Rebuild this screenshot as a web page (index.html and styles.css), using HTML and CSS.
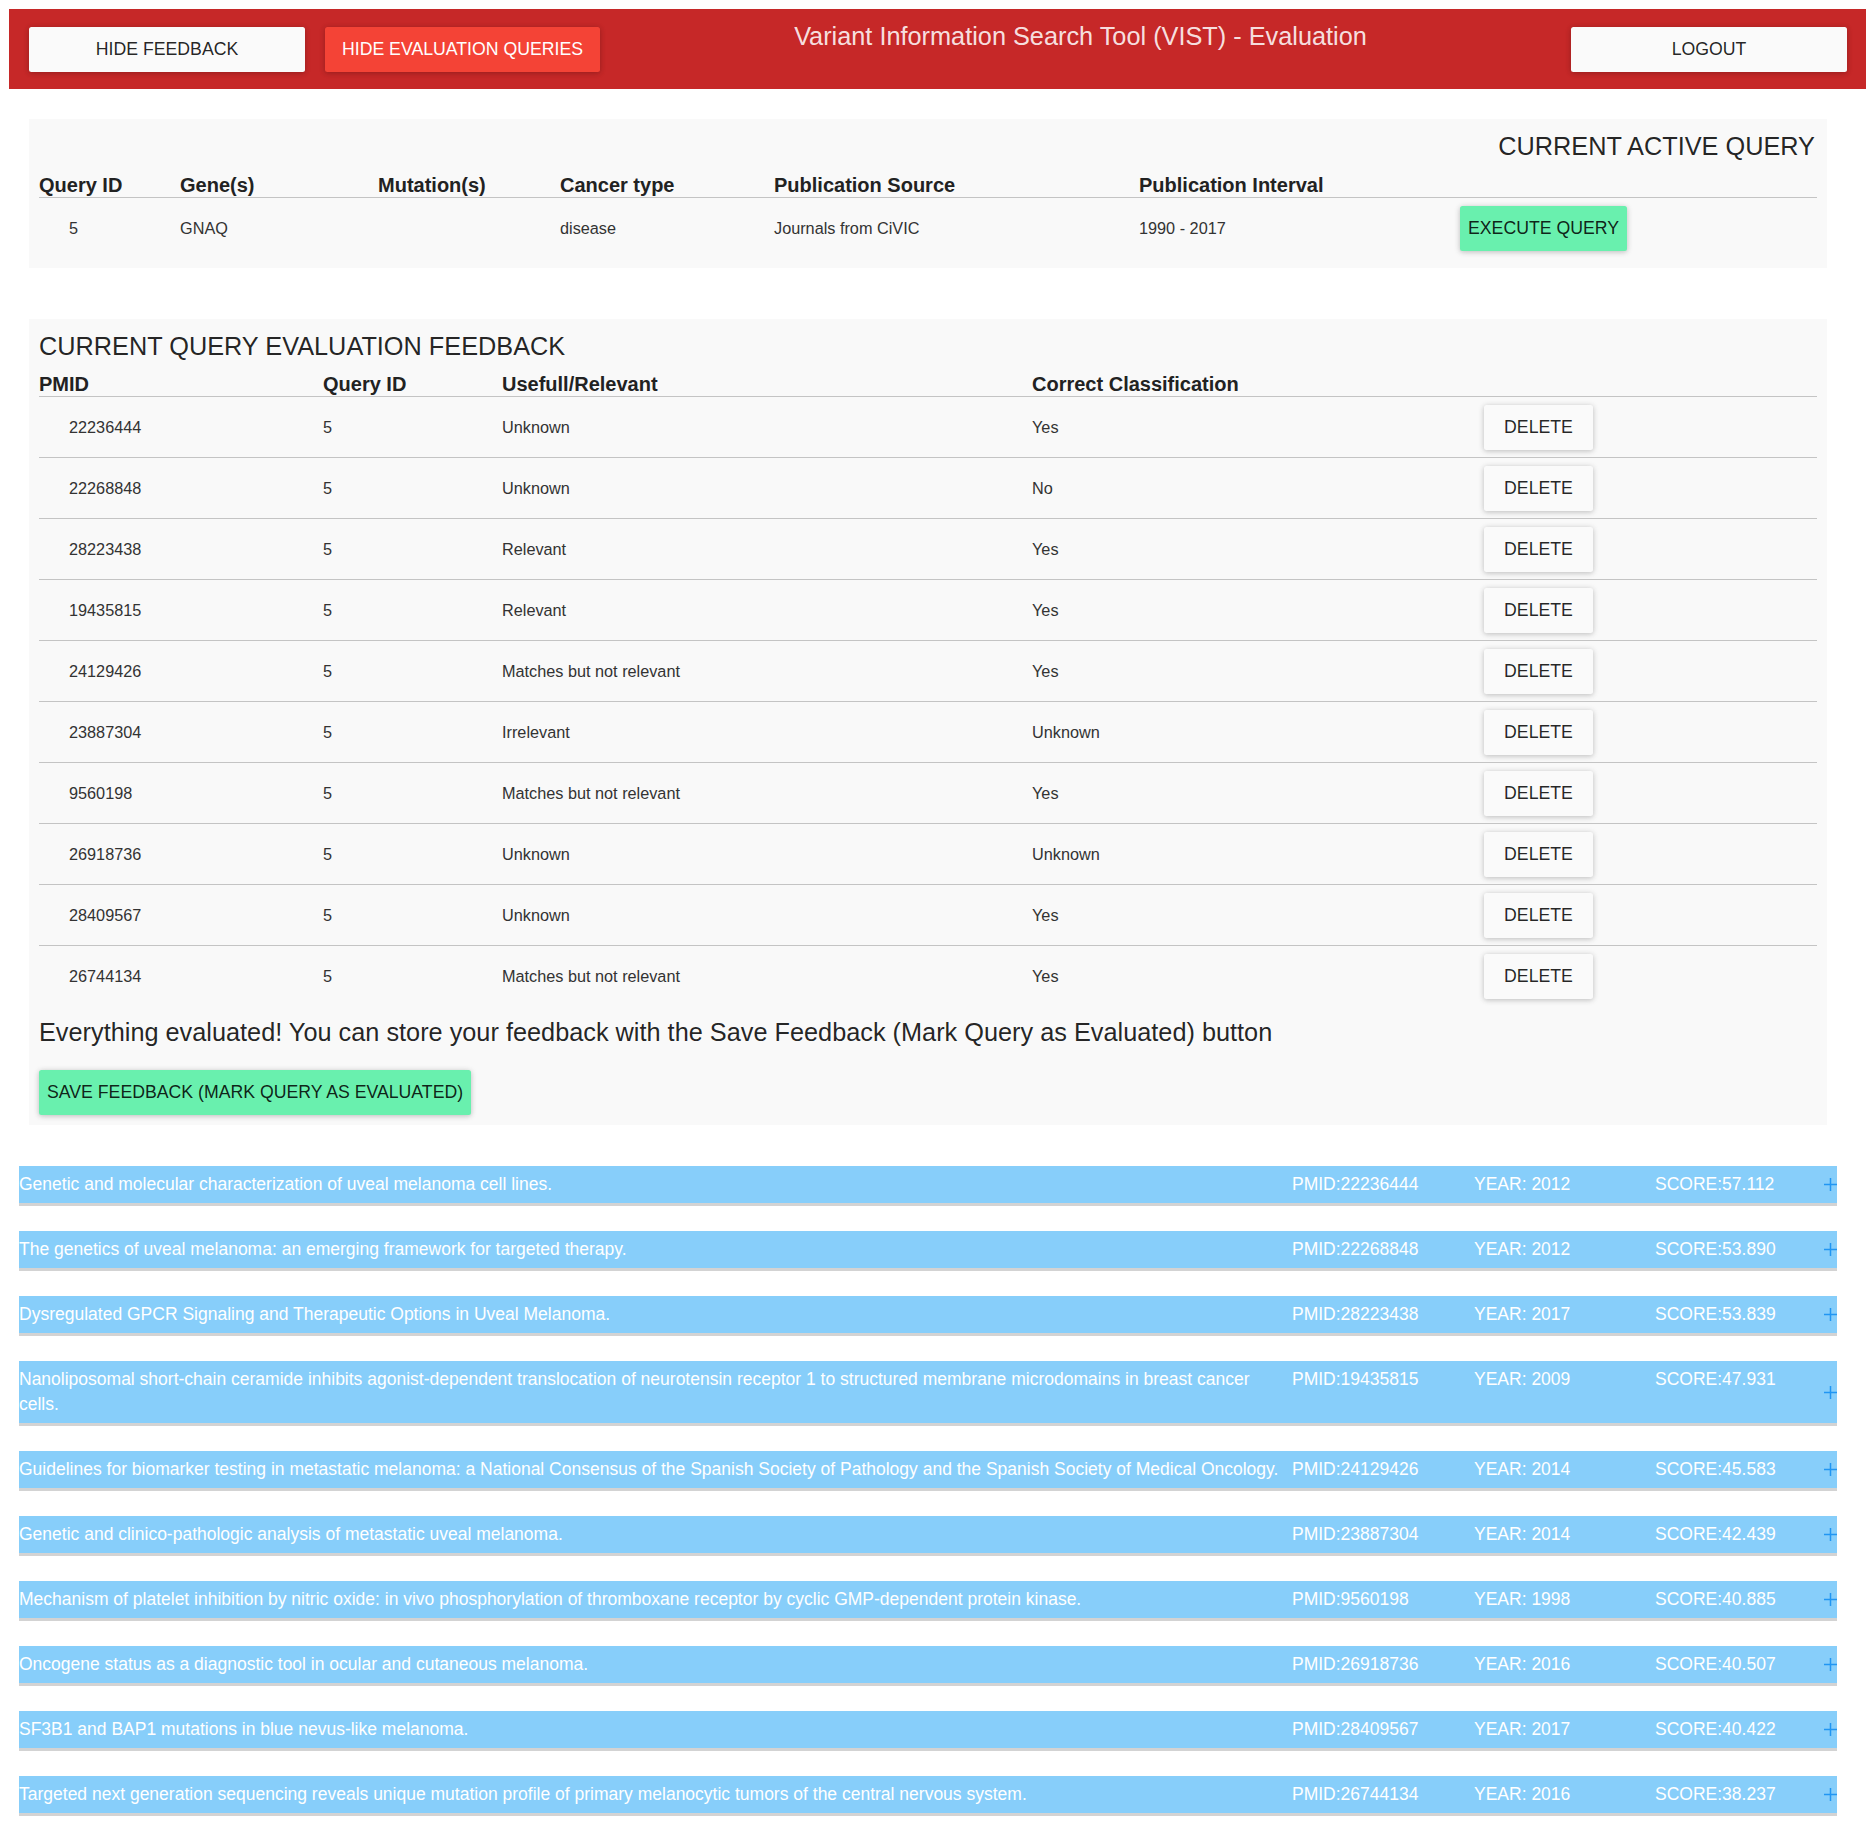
FILE: index.html
```html
<!DOCTYPE html>
<html>
<head>
<meta charset="utf-8">
<title>VIST - Evaluation</title>
<link rel="stylesheet" href="styles.css">
</head>
<body>
<header class="appbar">
  <button class="btn btn-light btn-wide">HIDE FEEDBACK</button>
  <button class="btn btn-red btn-wide">HIDE EVALUATION QUERIES</button>
  <h1 class="app-title">Variant Information Search Tool (VIST) - Evaluation</h1>
  <button class="btn btn-light btn-wide">LOGOUT</button>
</header>

<section class="card">
  <h2 class="card-title card-title-right">CURRENT ACTIVE QUERY</h2>
  <table class="tbl">
    <colgroup>
      <col class="c-141"><col class="c-198"><col class="c-182"><col class="c-214"><col class="c-365"><col class="c-321"><col>
    </colgroup>
    <thead>
      <tr><th>Query ID</th><th>Gene(s)</th><th>Mutation(s)</th><th>Cancer type</th><th>Publication Source</th><th>Publication Interval</th><th></th></tr>
    </thead>
    <tbody>
      <tr class="last"><td class="first">5</td><td>GNAQ</td><td></td><td>disease</td><td>Journals from CiVIC</td><td>1990 - 2017</td><td><button class="btn btn-green">EXECUTE QUERY</button></td></tr>
    </tbody>
  </table>
</section>

<section class="card card-feedback">
  <h2 class="card-title">CURRENT QUERY EVALUATION FEEDBACK</h2>
  <table class="tbl tbl-feedback">
    <colgroup>
      <col class="c-284"><col class="c-179"><col class="c-530"><col class="c-452"><col>
    </colgroup>
    <thead>
      <tr><th>PMID</th><th>Query ID</th><th>Usefull/Relevant</th><th>Correct Classification</th><th></th></tr>
    </thead>
    <tbody>
      <tr><td class="first">22236444</td><td>5</td><td>Unknown</td><td>Yes</td><td><button class="btn btn-light btn-delete">DELETE</button></td></tr>
      <tr><td class="first">22268848</td><td>5</td><td>Unknown</td><td>No</td><td><button class="btn btn-light btn-delete">DELETE</button></td></tr>
      <tr><td class="first">28223438</td><td>5</td><td>Relevant</td><td>Yes</td><td><button class="btn btn-light btn-delete">DELETE</button></td></tr>
      <tr><td class="first">19435815</td><td>5</td><td>Relevant</td><td>Yes</td><td><button class="btn btn-light btn-delete">DELETE</button></td></tr>
      <tr><td class="first">24129426</td><td>5</td><td>Matches but not relevant</td><td>Yes</td><td><button class="btn btn-light btn-delete">DELETE</button></td></tr>
      <tr><td class="first">23887304</td><td>5</td><td>Irrelevant</td><td>Unknown</td><td><button class="btn btn-light btn-delete">DELETE</button></td></tr>
      <tr><td class="first">9560198</td><td>5</td><td>Matches but not relevant</td><td>Yes</td><td><button class="btn btn-light btn-delete">DELETE</button></td></tr>
      <tr><td class="first">26918736</td><td>5</td><td>Unknown</td><td>Unknown</td><td><button class="btn btn-light btn-delete">DELETE</button></td></tr>
      <tr><td class="first">28409567</td><td>5</td><td>Unknown</td><td>Yes</td><td><button class="btn btn-light btn-delete">DELETE</button></td></tr>
      <tr class="last"><td class="first">26744134</td><td>5</td><td>Matches but not relevant</td><td>Yes</td><td><button class="btn btn-light btn-delete">DELETE</button></td></tr>
    </tbody>
  </table>
  <p class="done-msg">Everything evaluated! You can store your feedback with the Save Feedback (Mark Query as Evaluated) button</p>
  <button class="btn btn-green">SAVE FEEDBACK (MARK QUERY AS EVALUATED)</button>
</section>

<section class="results">
  <div class="result"><div class="r-title">Genetic and molecular characterization of uveal melanoma cell lines.</div><div>PMID:22236444</div><div>YEAR: 2012</div><div>SCORE:57.112</div><svg class="plus" width="13" height="13" viewBox="0 0 13 13"><path d="M6.5 0v13M0 6.5h13"/></svg></div>
  <div class="result"><div class="r-title">The genetics of uveal melanoma: an emerging framework for targeted therapy.</div><div>PMID:22268848</div><div>YEAR: 2012</div><div>SCORE:53.890</div><svg class="plus" width="13" height="13" viewBox="0 0 13 13"><path d="M6.5 0v13M0 6.5h13"/></svg></div>
  <div class="result"><div class="r-title">Dysregulated GPCR Signaling and Therapeutic Options in Uveal Melanoma.</div><div>PMID:28223438</div><div>YEAR: 2017</div><div>SCORE:53.839</div><svg class="plus" width="13" height="13" viewBox="0 0 13 13"><path d="M6.5 0v13M0 6.5h13"/></svg></div>
  <div class="result"><div class="r-title">Nanoliposomal short-chain ceramide inhibits agonist-dependent translocation of neurotensin receptor 1 to structured membrane microdomains in breast cancer cells.</div><div>PMID:19435815</div><div>YEAR: 2009</div><div>SCORE:47.931</div><svg class="plus" width="13" height="13" viewBox="0 0 13 13"><path d="M6.5 0v13M0 6.5h13"/></svg></div>
  <div class="result"><div class="r-title">Guidelines for biomarker testing in metastatic melanoma: a National Consensus of the Spanish Society of Pathology and the Spanish Society of Medical Oncology.</div><div>PMID:24129426</div><div>YEAR: 2014</div><div>SCORE:45.583</div><svg class="plus" width="13" height="13" viewBox="0 0 13 13"><path d="M6.5 0v13M0 6.5h13"/></svg></div>
  <div class="result"><div class="r-title">Genetic and clinico-pathologic analysis of metastatic uveal melanoma.</div><div>PMID:23887304</div><div>YEAR: 2014</div><div>SCORE:42.439</div><svg class="plus" width="13" height="13" viewBox="0 0 13 13"><path d="M6.5 0v13M0 6.5h13"/></svg></div>
  <div class="result"><div class="r-title">Mechanism of platelet inhibition by nitric oxide: in vivo phosphorylation of thromboxane receptor by cyclic GMP-dependent protein kinase.</div><div>PMID:9560198</div><div>YEAR: 1998</div><div>SCORE:40.885</div><svg class="plus" width="13" height="13" viewBox="0 0 13 13"><path d="M6.5 0v13M0 6.5h13"/></svg></div>
  <div class="result"><div class="r-title">Oncogene status as a diagnostic tool in ocular and cutaneous melanoma.</div><div>PMID:26918736</div><div>YEAR: 2016</div><div>SCORE:40.507</div><svg class="plus" width="13" height="13" viewBox="0 0 13 13"><path d="M6.5 0v13M0 6.5h13"/></svg></div>
  <div class="result"><div class="r-title">SF3B1 and BAP1 mutations in blue nevus-like melanoma.</div><div>PMID:28409567</div><div>YEAR: 2017</div><div>SCORE:40.422</div><svg class="plus" width="13" height="13" viewBox="0 0 13 13"><path d="M6.5 0v13M0 6.5h13"/></svg></div>
  <div class="result"><div class="r-title">Targeted next generation sequencing reveals unique mutation profile of primary melanocytic tumors of the central nervous system.</div><div>PMID:26744134</div><div>YEAR: 2016</div><div>SCORE:38.237</div><svg class="plus" width="13" height="13" viewBox="0 0 13 13"><path d="M6.5 0v13M0 6.5h13"/></svg></div>
</section>
</body>
</html>
```

FILE: styles.css
```css
html, body {
  margin: 0;
  padding: 0;
  background: #ffffff;
}

body {
  font-family: "Liberation Sans", Arial, sans-serif;
  color: rgba(0, 0, 0, 0.87);
  padding-bottom: 12px;
}

/* ---------- App bar ---------- */
.appbar {
  margin: 9px 4px 0 9px;
  height: 80px;
  background: #c62828;
  display: flex;
  align-items: center;
  gap: 20px;
  padding: 0 19px 0 20px;
  box-sizing: border-box;
}

.app-title {
  flex: 1;
  align-self: flex-start;
  margin: 12px 0 0;
  padding-right: 10px;
  font-size: 25.3px;
  font-weight: 400;
  line-height: 30px;
  text-align: center;
  color: rgba(255, 255, 255, 0.87);
  white-space: nowrap;
}

/* ---------- Buttons ---------- */
.btn {
  height: 45px;
  border: 0;
  border-radius: 2.5px;
  padding: 0 8px;
  font-family: "Liberation Sans", Arial, sans-serif;
  font-size: 17.7px;
  text-transform: uppercase;
  color: rgba(0, 0, 0, 0.87);
  box-shadow: 0 1px 7px rgba(0, 0, 0, 0.12), 0 1px 5px rgba(0, 0, 0, 0.14);
  cursor: pointer;
  white-space: nowrap;
}

.btn-wide {
  width: 276px;
}

.btn-light {
  background: #fafafa;
}

.btn-red {
  background: #f44336;
  color: #ffffff;
  width: 275px;
}

.btn-green {
  background: #69f0ae;
}

.btn-delete {
  min-width: 109px;
}

/* ---------- Cards ---------- */
.card {
  margin: 30px 43px 0 29px;
  background: #f9f9f9;
  padding: 12px 10px 10px;
}

.card-feedback {
  margin-top: 51px;
}

.card-title {
  margin: 0;
  font-size: 25.3px;
  font-weight: 400;
  line-height: 30px;
  color: rgba(0, 0, 0, 0.87);
}

.card-title-right {
  text-align: right;
  padding-right: 2px;
}

/* ---------- Tables ---------- */
.tbl {
  width: 100%;
  margin-top: 12px;
  border-collapse: collapse;
  table-layout: fixed;
}

.tbl-feedback {
  margin-top: 11px;
}

.c-141 { width: 141px; }
.c-198 { width: 198px; }
.c-182 { width: 182px; }
.c-214 { width: 214px; }
.c-365 { width: 365px; }
.c-321 { width: 321px; }
.c-284 { width: 284px; }
.c-179 { width: 179px; }
.c-530 { width: 530px; }
.c-452 { width: 452px; }

.tbl th {
  padding: 0;
  text-align: left;
  font-size: 20px;
  font-weight: 700;
  line-height: 24px;
  color: #222222;
  border-bottom: 1px solid #c4c4c4;
}

.tbl td {
  padding: 0;
  height: 60px;
  font-size: 16.25px;
  color: #333333;
  vertical-align: middle;
  border-bottom: 1px solid #c4c4c4;
}

.tbl tr.last td {
  border-bottom: 0;
}

.tbl td.first {
  padding-left: 30px;
}

.done-msg {
  margin: 11px 0 23px;
  font-size: 25.3px;
  line-height: 30px;
  color: rgba(0, 0, 0, 0.87);
}

/* ---------- Result bars ---------- */
.results {
  margin: 41px 33px 0 19px;
  display: flex;
  flex-direction: column;
  gap: 25px;
}

.result {
  display: grid;
  grid-template-columns: 1273px 182px 181px 1fr 13px;
  align-items: start;
  background: #87cefa;
  border-bottom: 3px solid #d3d3d3;
  padding: 6px 0;
  color: #ffffff;
  font-size: 17.5px;
  line-height: 25px;
  overflow: hidden;
}

.r-title {
  padding-right: 8px;
}

.plus {
  align-self: center;
  display: block;
}

.plus path {
  stroke: #2196f3;
  stroke-width: 1.5;
  fill: none;
}
```
